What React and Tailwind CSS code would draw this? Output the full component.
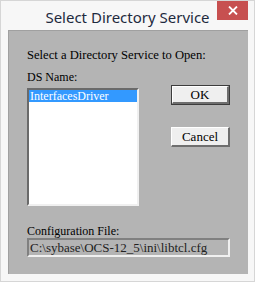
import React from 'react'

const serif = { fontFamily: '"Liberation Serif", "Times New Roman", serif' }

function Bevel({children, isDefault}){
  return (
    <div className={isDefault ? 'border border-[#3c3c3c]' : ''}>
      <div className={'flex items-center justify-center bg-[#efefef] border-t border-l border-t-white border-l-white border-r-2 border-b-2 border-r-[#6e6e6e] border-b-[#6e6e6e] text-[13px] text-black ' + (isDefault ? 'h-[18px]' : 'h-[20px]')}>
        {children}
      </div>
    </div>
  )
}

export default function App(){
  return (
    <div className="w-[255px] h-[282px] bg-[#f7f7f7] border border-[#d6d6d6] flex flex-col overflow-hidden">
      <div className="h-[29px] flex relative">
        <div className="flex-1 pt-[5px] text-[15px] text-[#1e2a3e] text-center" style={{fontFamily:'"Noto Sans", sans-serif'}}>
          Select Directory Service
        </div>
        <div className="absolute right-[6px] top-[-1px] w-[31px] h-[20px] bg-[#c75050] flex items-center justify-center">
          <svg width="10" height="9" viewBox="0 0 10 9"><path d="M1 0.5 L9 8.5 M9 0.5 L1 8.5" stroke="white" strokeWidth="1.8"/></svg>
        </div>
      </div>
      <div className="ml-[7px] mr-[6px] h-[244px] bg-[#b4b4b4] border-t border-l border-[#a0a0a0] pl-[18px] pt-[17px] text-[12px] leading-[14px] text-black" style={serif}>
        <div className="text-[12.6px]">Select a Directory Service to Open:</div>
        <div className="flex mt-[8px]">
          <div className="w-[112px]">
            <div>DS Name:</div>
            <div className="mt-[4px] h-[118px] bg-white border-2 border-t-[#6a6a6a] border-l-[#6a6a6a] border-r-[#f0f0f0] border-b-[#f0f0f0]">
              <div className="h-[12px] bg-[#3399ff] text-white leading-[12px] pl-[1px]">InterfacesDriver</div>
            </div>
          </div>
          <div className="ml-[32px] w-[59px] flex flex-col pt-[15px]">
            <Bevel isDefault>OK</Bevel>
            <div className="h-[22px]" />
            <Bevel>Cancel</Bevel>
          </div>
        </div>
        <div className="mt-[18px]">Configuration File:</div>
        <div className="w-[203px] h-[19px] border-2 border-t-[#808080] border-l-[#808080] border-r-[#f0f0f0] border-b-[#f0f0f0] pl-[1px] leading-[15px] text-[13px] text-[#222]">
          C:\sybase\OCS-12_5\ini\libtcl.cfg
        </div>
      </div>
    </div>
  )
}
